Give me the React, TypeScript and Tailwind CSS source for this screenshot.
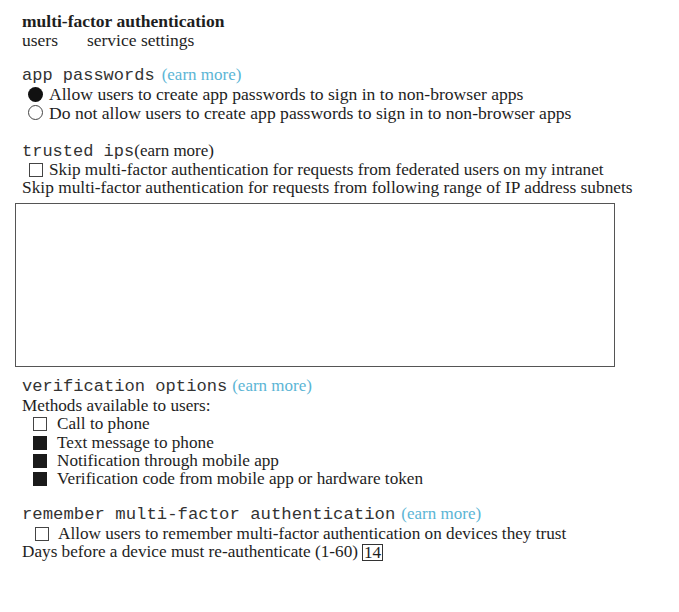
import React from 'react';

const serif = "font-['Liberation_Serif','Times_New_Roman',serif]";
const mono = "font-['Liberation_Mono','Courier_New',monospace]";

const LearnMore = ({ blue = true }: { blue?: boolean }) => (
  <span className={`${serif} text-[17px] ${blue ? 'text-[#5bb5d5]' : 'text-[#222]'}`}>(earn more)</span>
);

const Box = ({ checked = false }: { checked?: boolean }) => (
  <span
    className={`inline-block w-[14px] h-[14px] shrink-0 ${
      checked ? 'bg-[#1a1a1a]' : 'border border-[#444] bg-white'
    }`}
  />
);

const Radio = ({ checked = false }: { checked?: boolean }) => (
  <span
    className={`inline-block w-[15px] h-[15px] rounded-full shrink-0 ${
      checked ? 'bg-[#111]' : 'border border-[#444] bg-white'
    }`}
  />
);

export default function App() {
  return (
    <div className={`w-[679px] h-[612px] bg-white text-[#1e1e1e] ${serif} text-[17.2px] leading-[18.5px]`}>
      <div className="pt-[12px] pl-[22px] text-[17.5px]">
        <div className="font-bold">multi-factor authentication</div>
        <div className="flex gap-[29px]">
          <span>users</span>
          <span>service settings</span>
        </div>
      </div>

      {/* app passwords */}
      <div className="mt-[16.5px] pl-[22px]">
        <div className="flex items-baseline gap-[7px]">
          <span className={`${mono} text-[17px] text-[#333]`}>app passwords</span>
          <LearnMore />
        </div>
        <div className="text-[17.6px]">
          <div className="flex items-center gap-[6px] pl-[6px]">
            <Radio checked />
            <span>Allow users to create app passwords to sign in to non-browser apps</span>
          </div>
          <div className="flex items-center gap-[6px] pl-[6px]">
            <Radio />
            <span>Do not allow users to create app passwords to sign in to non-browser apps</span>
          </div>
        </div>
      </div>

      {/* trusted ips */}
      <div className="mt-[19.5px] pl-[22px] leading-[18px]">
        <div className="flex items-baseline">
          <span className={`${mono} text-[17px] text-[#333]`}>trusted ips</span>
          <LearnMore blue={false} />
        </div>
        <div className="flex items-center gap-[6px] pl-[7px]">
          <Box />
          <span>Skip multi-factor authentication for requests from federated users on my intranet</span>
        </div>
        <div className="text-[17.35px]">
          Skip multi-factor authentication for requests from following range of IP address subnets
        </div>
      </div>

      <div className="ml-[15px] mt-[6px] w-[600px] h-[164px] border border-[#555]" />

      {/* verification options */}
      <div className="mt-[10.75px] pl-[22px]">
        <div className="flex items-baseline gap-[5px]">
          <span className={`${mono} text-[17.1px] text-[#333]`}>verification options</span>
          <LearnMore />
        </div>
        <div>Methods available to users:</div>
        <div className="pl-[11px] leading-[18.3px]">
          {[
            ['Call to phone', false],
            ['Text message to phone', true],
            ['Notification through mobile app', true],
            ['Verification code from mobile app or hardware token', true],
          ].map(([label, checked]) => (
            <div key={label as string} className="flex items-center gap-[10px]">
              <Box checked={checked as boolean} />
              <span>{label}</span>
            </div>
          ))}
        </div>
      </div>

      {/* remember */}
      <div className="mt-[16.75px] pl-[22px]">
        <div className="flex items-baseline gap-[6px]">
          <span className={`${mono} text-[17.3px] text-[#333]`}>remember multi-factor authentication</span>
          <LearnMore />
        </div>
        <div className="flex items-center gap-[9px] pl-[13px]">
          <Box />
          <span>Allow users to remember multi-factor authentication on devices they trust</span>
        </div>
        <div className="flex items-center gap-[4px]">
          <span>Days before a device must re-authenticate (1-60)</span>
          <span className="border border-[#333] leading-[15px] px-[1px]">14</span>
        </div>
      </div>
    </div>
  );
}
